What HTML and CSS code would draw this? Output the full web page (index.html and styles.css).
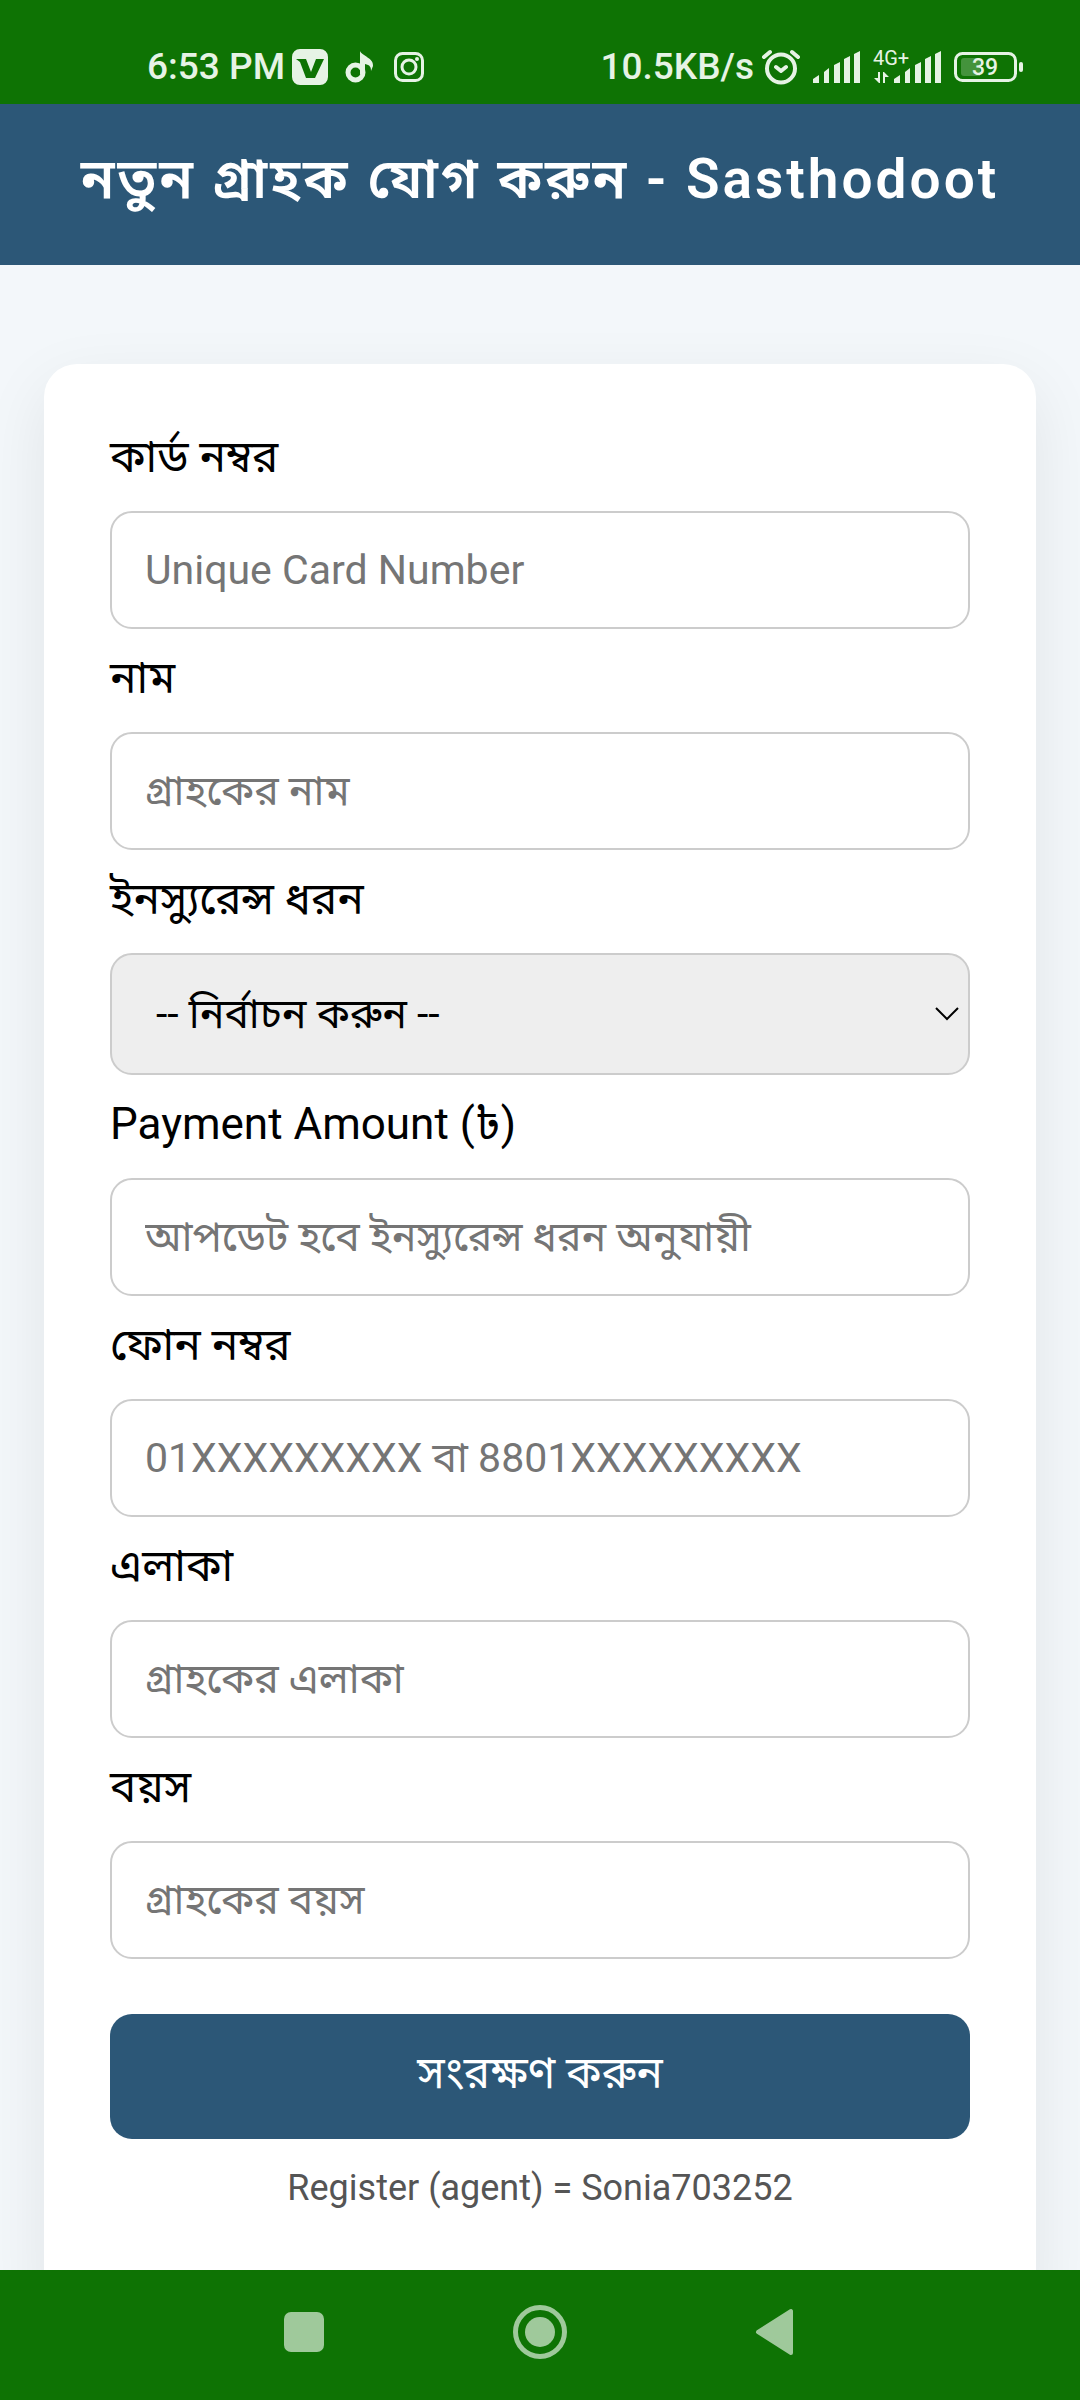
FILE: index.html
```html
<!DOCTYPE html>
<html lang="bn">
<head>
  <meta charset="utf-8">
  <meta name="viewport" content="width=device-width, initial-scale=1">
  <title>নতুন গ্রাহক যোগ করুন - Sasthodoot</title>
  <link rel="stylesheet" href="styles.css">
</head>
<body>
  <div class="status-bar">
    <div class="status-left">
      <span class="status-text">6:53 PM</span>
      <svg width="36" height="36" viewBox="0 0 36 36" fill="currentColor" aria-hidden="true"><path fill-rule="evenodd" d="M8 0h20a8 8 0 0 1 8 8v20a8 8 0 0 1-8 8H8a8 8 0 0 1-8-8V8a8 8 0 0 1 8-8zM4 10l4 3 6 16h9l9-19h-8l-5 13-5-13z"/></svg>
      <svg class="icon-note" width="30" height="34" viewBox="0 0 30 34" aria-hidden="true"><circle cx="10.500" cy="22.500" r="7.500" fill="none" stroke="currentColor" stroke-width="5"/><path fill="currentColor" d="M15 1c2 5 14 7 13 15l-2 5c0-4-1-6-6-7v10h-5z"/></svg>
      <svg width="30" height="30" viewBox="0 0 30 30" fill="none" stroke="currentColor" stroke-width="3" aria-hidden="true"><rect x="1.500" y="1.500" width="27" height="27" rx="7"/><circle cx="15" cy="15" r="7"/><circle cx="23" cy="7" r="2" fill="currentColor" stroke="none"/></svg>
    </div>
    <div class="status-right">
      <span class="status-text">10.5KB/s</span>
      <svg class="icon-alarm" width="40" height="36" viewBox="0 0 40 36" fill="none" stroke="currentColor" stroke-width="4" stroke-linecap="round" stroke-linejoin="round" aria-hidden="true"><circle cx="20" cy="19.500" r="14"/><path d="M15 18l5 4 5-4M3 8l6-5M37 8l-6-5"/></svg>
      <svg class="icon-signal" width="48" height="32" viewBox="0 0 48 32" fill="currentColor" aria-hidden="true"><path d="M0 32v-4l6-4v8zM11 32V21l5-4v15zM21 32V14l6-3v21zM31 32V8l6-3v27zM41 32V3l6-3v32z"/></svg>
      <svg class="icon-signal" width="69" height="40" viewBox="0 -2 69 40" fill="currentColor" aria-hidden="true"><text class="network-label" x="0" y="16">4G+</text><path d="M5 23h2v11H6l-5-5h4zM10 34V23h1l5 5h-4v6zM21 34v-4l6-4v8zM32 34V23l5-4v15zM42 34V16l6-3v21zM52 34V10l6-3v27zM62 34V5l6-3v32z"/></svg>
      <svg class="icon-battery" width="70" height="32" viewBox="0 0 70 32" aria-hidden="true"><rect x="1.500" y="2.500" width="60" height="27" rx="7" fill="none" stroke="currentColor" stroke-width="3"/><path fill="currentColor" opacity=".25" d="M10 7h16v18H10a3 3 0 0 1-3-3V10a3 3 0 0 1 3-3z"/><rect x="65" y="11" width="4" height="10" rx="2" fill="currentColor"/><text class="battery-label" x="31" y="24" text-anchor="middle" fill="currentColor">39</text></svg>
    </div>
  </div>

  <header class="page-header">
    <h1>নতুন গ্রাহক যোগ করুন - Sasthodoot</h1>
  </header>

  <main class="content">
    <form class="card">
      <div class="field">
        <label for="card-number">কার্ড নম্বর</label>
        <input id="card-number" type="text" placeholder="Unique Card Number">
      </div>
      <div class="field">
        <label for="name">নাম</label>
        <input id="name" type="text" placeholder="গ্রাহকের নাম">
      </div>
      <div class="field">
        <label for="insurance">ইনস্যুরেন্স ধরন</label>
        <div class="select-wrap">
          <select id="insurance"><option>-- নির্বাচন করুন --</option></select>
          <svg class="chevron" width="24" height="14" viewBox="0 0 24 14" fill="none" stroke="currentColor" stroke-width="2" aria-hidden="true"><path d="M1 1l11 11L23 1"/></svg>
        </div>
      </div>
      <div class="field">
        <label for="amount">Payment Amount (৳)</label>
        <input id="amount" type="text" placeholder="আপডেট হবে ইনস্যুরেন্স ধরন অনুযায়ী">
      </div>
      <div class="field">
        <label for="phone">ফোন নম্বর</label>
        <input id="phone" type="tel" placeholder="01XXXXXXXXX বা 8801XXXXXXXXX">
      </div>
      <div class="field">
        <label for="area">এলাকা</label>
        <input id="area" type="text" placeholder="গ্রাহকের এলাকা">
      </div>
      <div class="field">
        <label for="age">বয়স</label>
        <input id="age" type="text" placeholder="গ্রাহকের বয়স">
      </div>
      <button class="submit" type="submit">সংরক্ষণ করুন</button>
      <p class="agent">Register (agent) = Sonia703252</p>
    </form>
  </main>

  <nav class="system-nav">
    <button type="button" aria-label="Recent apps"><svg width="54" height="54" viewBox="0 0 54 54" fill="currentColor"><rect x="7" y="7" width="40" height="40" rx="7"/></svg></button>
    <button type="button" aria-label="Home"><svg width="54" height="54" viewBox="0 0 54 54" fill="currentColor"><circle cx="27" cy="27" r="24.500" fill="none" stroke="currentColor" stroke-width="5"/><circle cx="27" cy="27" r="15"/></svg></button>
    <button type="button" aria-label="Back"><svg width="54" height="54" viewBox="0 0 54 54" fill="currentColor" stroke="currentColor" stroke-width="4" stroke-linejoin="round"><path d="M9 27L42 6v42z"/></svg></button>
  </nav>
</body>
</html>
```
FILE: styles.css
```css
* {
  box-sizing: border-box;
}

body {
  margin: 0;
  height: 100vh;
  display: flex;
  flex-direction: column;
  background: #f3f7fa;
  color: #000;
  font-family: Roboto, "Noto Sans Bengali", "Noto Sans", sans-serif;
  font-size: 44px;
}

.status-bar {
  display: flex;
  flex: none;
  align-items: center;
  justify-content: space-between;
  height: 104px;
  padding: 30px 56px 0 147px;
  background: #0e7304;
  color: #e6f3e5;
}

.status-left,
.status-right {
  display: flex;
  align-items: center;
}

.status-left {
  gap: 7px;
}

.status-text {
  font-size: 37px;
  font-weight: 500;
  line-height: 44px;
  white-space: nowrap;
}

.icon-note {
  margin: 0 12px 0 10px;
}

.icon-alarm {
  margin-left: 7px;
}

.icon-signal {
  margin-left: 12px;
}

.icon-battery {
  margin-left: 12px;
}

.network-label {
  font-size: 20px;
}

.battery-label {
  font-size: 23px;
  font-weight: 500;
}

.page-header {
  flex: none;
  padding: 44px 22px 55px;
  background: #2c5777;
  color: #fff;
  text-align: center;
}

.page-header h1 {
  margin: 0;
  font-size: 55px;
  font-weight: 600;
  line-height: 62px;
  letter-spacing: 3px;
}

.content {
  flex: 1;
  min-height: 0;
  overflow-y: auto;
  scrollbar-width: none;
  padding: 99px 44px;
}

.card {
  display: flex;
  flex-direction: column;
  gap: 22px;
  padding: 66px 66px 99px;
  border-radius: 33px;
  background: #fff;
  box-shadow: 0 22px 66px rgba(0, 0, 0, 0.08);
}

.field {
  display: flex;
  flex-direction: column;
  gap: 27px;
}

.field label {
  line-height: 54px;
}

.field input,
.field select {
  width: 100%;
  height: 118px;
  padding: 0 33px;
  border: 2px solid #ccc;
  border-radius: 22px;
  background: #fff;
  color: #000;
  font: inherit;
  font-size: 41px;
}

.field input::placeholder {
  color: #757575;
  opacity: 1;
}

.select-wrap {
  display: grid;
  align-items: center;
}

.select-wrap select,
.chevron {
  grid-area: 1 / 1;
}

.field select {
  height: 122px;
  padding: 0 44px;
  appearance: none;
  background: #eee;
}

.chevron {
  justify-self: end;
  margin-right: 11px;
  pointer-events: none;
}

.submit {
  height: 125px;
  margin-top: 33px;
  padding: 0;
  border: 0;
  border-radius: 22px;
  background: #2c5777;
  color: #fff;
  font: inherit;
}

.agent {
  margin: 0;
  color: #555;
  font-size: 36px;
  line-height: 55px;
  text-align: center;
}

.system-nav {
  display: flex;
  flex: none;
  align-items: center;
  justify-content: center;
  gap: 182px;
  height: 130px;
  padding-bottom: 6px;
  background: #0e7304;
}

.system-nav button {
  display: flex;
  padding: 0;
  border: 0;
  background: none;
  color: #9fc99b;
}
```
